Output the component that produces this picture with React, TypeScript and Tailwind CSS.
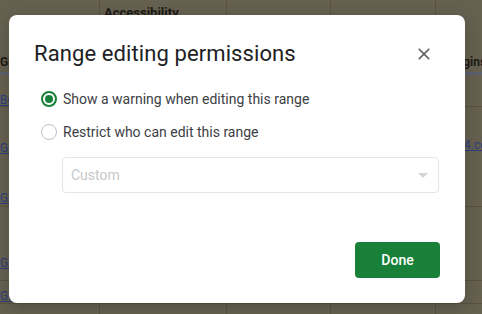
import React from "react";

const font = { fontFamily: "Roboto, 'Liberation Sans', Arial, sans-serif" };

function Cell({ w, children, last }: { w: string; children?: React.ReactNode; last?: boolean }) {
  return (
    <div className={`${w} shrink-0 overflow-hidden ${last ? "" : "border-r border-[#58523f]"}`}>{children}</div>
  );
}

function Link({ children }: { children: React.ReactNode }) {
  return <div className="text-[12px] leading-4 text-[#2c3d7a] underline whitespace-nowrap">{children}</div>;
}

export default function App() {
  return (
    <div className="relative w-[482px] h-[314px] overflow-hidden bg-[#666050]" style={font}>
      {/* underlying sheet */}
      <div className="flex flex-col">
        <div className="flex h-[72px]">
          <Cell w="w-[100px]">
            <div className="pt-[54px] text-[12px] leading-4 font-bold text-[#1d1b16] whitespace-nowrap">Group</div>
          </Cell>
          <Cell w="w-[127px]">
            <div className="pt-[5px] pl-[4px] text-[13px] leading-4 font-bold text-[#1d1b16]">Accessibility</div>
          </Cell>
          <Cell w="w-[104px]" />
          <Cell w="w-[105px]" />
          <Cell w="w-[46px]" last>
            <div className="pt-[54px] pl-[6px] text-[12px] leading-4 font-bold text-[#1d1b16] whitespace-nowrap">Margins</div>
          </Cell>
        </div>
        <div className="h-[3px] bg-[#5b5f6e]" />
        <div className="flex h-[32px] border-b border-[#58523f]">
          <Cell w="w-[100px]">
            <div className="pt-[17px]"><Link>Beta</Link></div>
          </Cell>
          <Cell w="w-[127px]" />
          <Cell w="w-[104px]" />
          <Cell w="w-[105px]" />
          <Cell w="w-[46px]" last />
        </div>
        <div className="flex h-[100px] border-b border-[#58523f]">
          <Cell w="w-[100px]">
            <div className="pt-[33px] flex flex-col gap-[34px]">
              <Link>Group</Link>
              <Link>Group</Link>
            </div>
          </Cell>
          <Cell w="w-[127px]" />
          <Cell w="w-[104px]" />
          <Cell w="w-[105px]" />
          <Cell w="w-[46px]" last>
            <div className="pt-[30px] pl-[28px]"><Link>4.co</Link></div>
          </Cell>
        </div>
        <div className="flex h-[74px] border-b border-[#58523f]">
          <Cell w="w-[100px]">
            <div className="pt-[48px]"><Link>Group</Link></div>
          </Cell>
          <Cell w="w-[127px]" />
          <Cell w="w-[104px]" />
          <Cell w="w-[105px]" />
          <Cell w="w-[46px]" last />
        </div>
        <div className="flex h-[23px] border-b border-[#58523f]">
          <Cell w="w-[100px]">
            <div className="pt-[7px]"><Link>Group</Link></div>
          </Cell>
          <Cell w="w-[127px]" />
          <Cell w="w-[104px]" />
          <Cell w="w-[105px]" />
          <Cell w="w-[46px]" last />
        </div>
        <div className="flex h-[20px]">
          <Cell w="w-[100px]" />
          <Cell w="w-[127px]" />
          <Cell w="w-[104px]" />
          <Cell w="w-[105px]" />
          <Cell w="w-[46px]" last />
        </div>
      </div>

      {/* dialog */}
      <div className="absolute left-[9px] top-[15px] w-[456px] h-[288px] bg-white rounded-[8px] shadow-[0_4px_16px_rgba(0,0,0,0.2)] flex flex-col pt-[25px] pl-[24px] pr-[25px] pb-[25px]">
        <div className="flex items-start justify-between">
          <div className="pl-[1px] text-[22px] leading-[28px] text-[#202124] whitespace-nowrap tracking-[0.1px]">Range editing permissions</div>
          <button className="mt-[4px] mr-[6px] w-[20px] h-[20px] text-[#5f6368]" aria-label="Close">
            <svg viewBox="0 0 24 24" width="20" height="20" fill="currentColor">
              <path d="M19 6.41L17.59 5 12 10.59 6.41 5 5 6.41 10.59 12 5 17.59 6.41 19 12 13.41 17.59 19 19 17.59 13.41 12z" />
            </svg>
          </button>
        </div>

        <div className="mt-[19px] flex flex-col gap-[9px]">
          <label className="flex items-center h-[24px]">
            <span className="ml-[8px] w-[16px] h-[16px] rounded-full border-2 border-[#188038] flex items-center justify-center">
              <span className="w-[8px] h-[8px] rounded-full bg-[#188038]" />
            </span>
            <span className="ml-[6px] text-[14px] text-[#3c4043]">Show a warning when editing this range</span>
          </label>
          <label className="flex items-center h-[24px]">
            <span className="ml-[8px] w-[16px] h-[16px] rounded-full border-[1.5px] border-[#bdc1c6]" />
            <span className="ml-[6px] text-[14px] text-[#3c4043]">Restrict who can edit this range</span>
          </label>
        </div>

        <div className="mt-[13px] ml-[29px] w-[377px] h-[36px] border border-[#e3e5e8] rounded-[4px] flex items-center justify-between pl-[8px] pr-[10px]">
          <span className="text-[14px] text-[#c6c9cc]">Custom</span>
          <svg width="10" height="5" viewBox="0 0 10 5">
            <path d="M0 0 L10 0 L5 5 Z" fill="#d3d6d9" />
          </svg>
        </div>

        <div className="flex-1" />
        <div className="flex justify-end">
          <button className="w-[85px] h-[36px] rounded-[4px] bg-[#188038] text-white text-[14px] font-medium">Done</button>
        </div>
      </div>
    </div>
  );
}
